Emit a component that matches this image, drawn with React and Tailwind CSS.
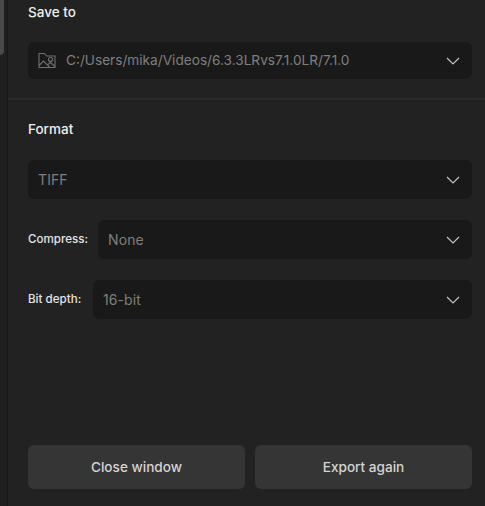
import React from "react";

const Chevron = () => (
  <svg width="14" height="8" viewBox="0 0 14 8" fill="none" className="shrink-0 text-[#c4c4c4]">
    <path d="M1 1l6 6 6-6" stroke="currentColor" strokeWidth="1.2" />
  </svg>
);

const FolderImage = () => (
  <svg width="18" height="17" viewBox="0 0 18 17" fill="none" className="shrink-0 text-[#707070]">
    <path d="M1 15.5V1.5h5.5l2 2.5H17v11.5H1z" stroke="currentColor" strokeWidth="1.1" />
    <path d="M1 13.5l4.5-4.5 6 6M10 12.5l2.5-2 4.5 4" stroke="currentColor" strokeWidth="1.1" />
    <circle cx="12.5" cy="7.5" r="2" stroke="currentColor" strokeWidth="1.1" />
  </svg>
);

const Select = ({ value, icon, className = "" }) => (
  <div className={`flex flex-1 items-center bg-[#191919] rounded-md pl-[10px] pr-[12px] ${className}`}>
    {icon}
    <span className={`flex-1 text-[#7f7f7f] ${icon ? "ml-[10px] text-[13.65px]" : "text-[14px] tracking-[0.1px]"}`}>{value}</span>
    <Chevron />
  </div>
);

const LabelRow = ({ label, value, gap }) => (
  <div className="flex items-center h-[39px]">
    <span className={`text-[11.6px] font-medium text-[#e4e4e4] whitespace-nowrap ${gap}`}>{label}</span>
    <Select value={value} className="h-[39px]" />
  </div>
);

export default function App() {
  return (
    <div className="flex h-[506px] w-[485px] overflow-hidden bg-[#222222] font-['Inter',sans-serif]">
      <div className="w-[8px] shrink-0 bg-[#1f1f1f] border-r border-[#171717]">
        <div className="w-[4px] h-[55px] bg-[#4a4a4a] rounded-br-sm" />
      </div>

      <div className="flex flex-1 flex-col">
        <div className="px-[20px] pr-[13px]">
          <h2 className="h-[24px] leading-[24px] text-[13.5px] font-medium text-[#efefef]">Save to</h2>
          <div className="flex mt-[18px] h-[37px]">
            <Select value="C:/Users/mika/Videos/6.3.3LRvs7.1.0LR/7.1.0" icon={<FolderImage />} className="h-[37px]" />
          </div>
        </div>

        <div className="mt-[19px] h-[2px] bg-[#2b2b2b]" />

        <div className="px-[20px] pr-[13px] flex flex-1 flex-col">
          <h2 className="mt-[19px] h-[20px] leading-[20px] text-[13.5px] font-medium text-[#efefef]">Format</h2>
          <div className="flex mt-[21px]">
            <Select value="TIFF" className="h-[39px]" />
          </div>
          <div className="mt-[21px]">
            <LabelRow label="Compress:" value="None" gap="w-[70px]" />
          </div>
          <div className="mt-[21px]">
            <LabelRow label="Bit depth:" value="16-bit" gap="w-[65px]" />
          </div>

          <div className="flex gap-[10px] mt-auto mb-[17px]">
            <button className="flex-1 h-[44px] bg-[#353535] rounded-md text-[13.6px] font-medium text-[#d4d4d4]">Close window</button>
            <button className="flex-1 h-[44px] bg-[#353535] rounded-md text-[13.6px] font-medium text-[#d4d4d4]">Export again</button>
          </div>
        </div>
      </div>
    </div>
  );
}
